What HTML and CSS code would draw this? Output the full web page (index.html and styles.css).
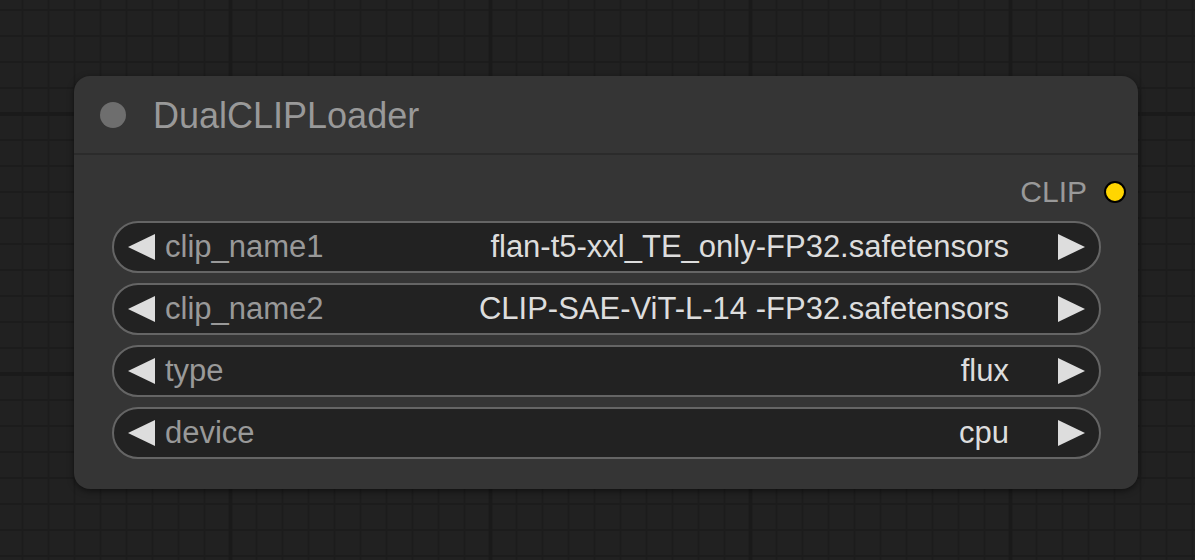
FILE: index.html
```html
<!DOCTYPE html>
<html lang="en">
  <head>
    <meta charset="UTF-8" />
    <title>DualCLIPLoader</title>
    <link rel="stylesheet" href="styles.css">
  </head>
  <body>
    <section class="node">
      <header class="node-title">
        <span class="node-dot"></span>
        <h1 class="node-name">DualCLIPLoader</h1>
      </header>

      <div class="node-body">
        <div class="output">
          <span class="output-name">CLIP</span>
          <span class="slot slot-clip"></span>
        </div>

        <div class="widget">
          <svg class="arrow" viewBox="0 0 27 26"><polygon points="27,0 27,26 0,13" /></svg>
          <span class="widget-label">clip_name1</span>
          <span class="widget-value">flan-t5-xxl_TE_only-FP32.safetensors</span>
          <svg class="arrow" viewBox="0 0 27 26"><polygon points="0,0 0,26 27,13" /></svg>
        </div>
        <div class="widget">
          <svg class="arrow" viewBox="0 0 27 26"><polygon points="27,0 27,26 0,13" /></svg>
          <span class="widget-label">clip_name2</span>
          <span class="widget-value">CLIP-SAE-ViT-L-14 -FP32.safetensors</span>
          <svg class="arrow" viewBox="0 0 27 26"><polygon points="0,0 0,26 27,13" /></svg>
        </div>
        <div class="widget">
          <svg class="arrow" viewBox="0 0 27 26"><polygon points="27,0 27,26 0,13" /></svg>
          <span class="widget-label">type</span>
          <span class="widget-value">flux</span>
          <svg class="arrow" viewBox="0 0 27 26"><polygon points="0,0 0,26 27,13" /></svg>
        </div>
        <div class="widget">
          <svg class="arrow" viewBox="0 0 27 26"><polygon points="27,0 27,26 0,13" /></svg>
          <span class="widget-label">device</span>
          <span class="widget-value">cpu</span>
          <svg class="arrow" viewBox="0 0 27 26"><polygon points="0,0 0,26 27,13" /></svg>
        </div>
      </div>
    </section>
  </body>
</html>
```

FILE: styles.css
```css
html,
body {
  height: 100%;
}

body {
  margin: 0;
  padding: 76px 0 0 74px;
  box-sizing: border-box;
  font-family: "Liberation Sans", Arial, sans-serif;
  background-color: #212121;
  background-image:
    linear-gradient(90deg, #1a1a1a 0 4px, transparent 4px),
    linear-gradient(180deg, #1a1a1a 0 4px, transparent 4px),
    linear-gradient(90deg, #1c1c1c 0 2px, transparent 2px),
    linear-gradient(180deg, #1c1c1c 0 2px, transparent 2px);
  background-size: 260px 100%, 100% 260px, 26px 100%, 100% 26px;
  background-position: 228.5px 0, 0 112px, 21.5px 0, 0 9px;
  overflow: hidden;
}

.node {
  width: 1064px;
  background: #353535;
  border-radius: 16px;
  box-shadow: 0 2px 6px rgba(0, 0, 0, 0.5);
}

.node-title {
  height: 77px;
  border-bottom: 2px solid #2b2b2b;
  display: flex;
  align-items: center;
  padding-left: 26px;
}

.node-dot {
  width: 26px;
  height: 26px;
  border-radius: 50%;
  background: #6e6e6e;
  margin-right: 27px;
}

.node-name {
  margin: 0;
  padding-top: 3px;
  font-size: 36px;
  font-weight: normal;
  line-height: 36px;
  color: #999;
}

.node-body {
  padding: 17px 37px 30px 38px;
  display: flex;
  flex-direction: column;
  gap: 10px;
}

.output {
  height: 40px;
  margin-right: -25px;
  margin-bottom: -1px;
  display: flex;
  align-items: center;
  justify-content: flex-end;
  font-size: 30px;
  color: #999;
}

.slot {
  width: 18px;
  height: 18px;
  border-radius: 50%;
  border: 2px solid #000;
  margin-left: 17px;
}

.slot-clip {
  background: #ffd500;
}

.widget {
  height: 48px;
  border: 2px solid #656565;
  border-radius: 26px;
  background: #222;
  display: flex;
  align-items: center;
  padding: 0 14px;
  font-size: 31px;
}

.arrow {
  width: 27px;
  height: 26px;
  fill: #ddd;
  flex: none;
}

.widget-label {
  flex: 1;
  margin-left: 10px;
  color: #999;
  white-space: nowrap;
}

.widget-value {
  margin-right: 49px;
  color: #ddd;
  white-space: nowrap;
}
```
